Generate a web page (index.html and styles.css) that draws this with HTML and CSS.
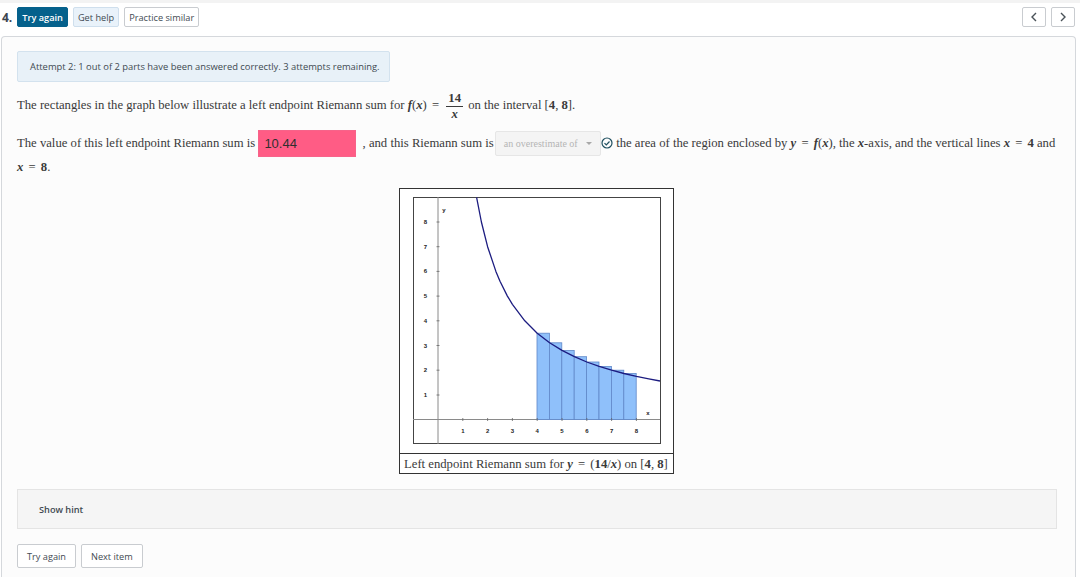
FILE: index.html
```html
<!DOCTYPE html>
<html lang="en">
<head>
    <meta charset="UTF-8">
    <title>Riemann sum question</title>
    <link rel="stylesheet" href="styles.css">
</head>
<body>
    <div class="top-strip"></div>

    <div class="toolbar">
        <strong class="number">4.</strong>
        <button class="btn btn-primary">Try again</button>
        <button class="btn btn-light">Get help</button>
        <button class="btn">Practice similar</button>
        <div class="nav">
            <button class="btn btn-nav">
                <svg width="8" height="10" viewBox="0 0 8 10"><path d="M6 1 2 5l4 4" /></svg>
            </button>
            <button class="btn btn-nav">
                <svg width="8" height="10" viewBox="0 0 8 10"><path d="M2 1l4 4-4 4" /></svg>
            </button>
        </div>
    </div>

    <div class="card">
        <div class="alert">Attempt 2: 1 out of 2 parts have been answered correctly. 3 attempts remaining.</div>

        <p class="line-first">
            The rectangles in the graph below illustrate a left endpoint Riemann sum for
            <span class="m">f</span>(<span class="m">x</span>) <span class="eq">=</span>
            <span class="frac"><span class="frac-top">14</span><span class="frac-bottom m">x</span></span>
            on the interval [<b>4</b>, <b>8</b>].
        </p>

        <p class="line-second">
            The value of this left endpoint Riemann sum is
            <input class="answer" type="text" value="10.44" readonly>
            , and this Riemann sum is
            <span class="select">an overestimate of<span class="select-arrow"></span></span>
            <svg class="check" width="12" height="12" viewBox="0 0 12 12">
                <circle cx="6" cy="6" r="5" />
                <path d="M3.5 6.2 5.3 8l3.2-3.5" />
            </svg>
            the area of the region enclosed by <span class="m">y</span> <span class="eq">=</span> <span class="m">f</span>(<span class="m">x</span>), the <span class="m">x</span>-axis, and the vertical lines <span class="m">x</span> <span class="eq">=</span> <b>4</b> and
            <span class="m">x</span> <span class="eq">=</span> <b>8</b>.
        </p>

        <figure class="graph">
            <svg class="plot" width="248" height="248" viewBox="413 197 248 248">
                <rect class="frame" x="413.5" y="197.5" width="247" height="246" />
                <line class="axis" x1="438" y1="197" x2="438" y2="444" />
                <line class="axis" x1="413" y1="419.5" x2="660" y2="419.5" />

                <g class="bars">
                    <rect x="537" y="333.2" width="12.4" height="86.4" />
                    <rect x="549.4" y="342.8" width="12.4" height="76.8" />
                    <rect x="561.8" y="350.4" width="12.4" height="69.2" />
                    <rect x="574.2" y="356.7" width="12.4" height="62.9" />
                    <rect x="586.6" y="362" width="12.4" height="57.6" />
                    <rect x="599" y="366.4" width="12.4" height="53.2" />
                    <rect x="611.4" y="370.2" width="12.4" height="49.4" />
                    <rect x="623.8" y="373.5" width="12.4" height="46.1" />
                </g>

                <g class="ticks">
                    <path d="M462.8 418v3M487.6 418v3M512.4 418v3M537.2 418v3M562 418v3M586.8 418v3M611.6 418v3M636.4 418v3" />
                    <path d="M436.5 395h3M436.5 370.2h3M436.5 345.5h3M436.5 320.8h3M436.5 296.1h3M436.5 271.4h3M436.5 246.7h3M436.5 222h3" />
                </g>

                <polyline class="curve" points="476.6,197.3 481.4,222 487.6,246.7 495.9,271.4 500,281.3 507.4,296.1 512.4,304.3 524.8,320.8 537.2,333.2 549.6,342.8 562,350.4 574.4,356.7 586.8,362 599.2,366.4 611.6,370.2 624,373.5 636.4,376.4 648.8,378.9 660,381" />

                <g class="labels">
                    <text x="462.8" y="433">1</text>
                    <text x="487.6" y="433">2</text>
                    <text x="512.4" y="433">3</text>
                    <text x="537.2" y="433">4</text>
                    <text x="562" y="433">5</text>
                    <text x="586.8" y="433">6</text>
                    <text x="611.6" y="433">7</text>
                    <text x="636.4" y="433">8</text>
                    <text x="648" y="415">x</text>
                    <text x="425.5" y="397">1</text>
                    <text x="425.5" y="372">2</text>
                    <text x="425.5" y="347.5">3</text>
                    <text x="425.5" y="322.5">4</text>
                    <text x="425.5" y="298">5</text>
                    <text x="425.5" y="273">6</text>
                    <text x="425.5" y="248.5">7</text>
                    <text x="425.5" y="224">8</text>
                    <text x="444" y="212">y</text>
                </g>
            </svg>
            <figcaption>Left endpoint Riemann sum for <span class="m">y</span> <span class="eq">=</span> (<b>14</b>/<span class="m">x</span>) on [<b>4</b>, <b>8</b>]</figcaption>
        </figure>

        <div class="hint">Show hint</div>

        <div class="actions">
            <button class="btn btn-large">Try again</button>
            <button class="btn btn-large">Next item</button>
        </div>
    </div>
</body>
</html>
```

FILE: styles.css
```css
html, body {
    height: 577px;
    overflow: hidden;
}

body {
    margin: 0;
    background: #fff;
    color: #3a3a3a;
    font-family: "Liberation Serif", serif;
    font-size: 12.7px;
}

.top-strip {
    height: 3px;
    background: #f3f3f3;
}

.toolbar {
    display: flex;
    align-items: center;
    gap: 5px;
    padding: 4px 5px 0 2px;
    height: 20px;
}

.number {
    font-family: "Open Sans", sans-serif;
    font-size: 12px;
    color: #3b4550;
}

.btn {
    height: 20px;
    padding: 0 4px;
    background: #fff;
    border: 1px solid #c9ccd0;
    border-radius: 2px;
    color: #3f4a52;
    font-family: "Open Sans", sans-serif;
    font-size: 9.2px;
    white-space: nowrap;
}

.btn-primary {
    background: #05618c;
    border-color: #05618c;
    color: #fff;
    font-weight: 600;
}

.btn-light {
    background: #e9f2fa;
    border-color: #cfdfed;
}

.nav {
    display: flex;
    gap: 5px;
    margin-left: auto;
}

.btn-nav {
    display: flex;
    align-items: center;
    justify-content: center;
    width: 24px;
    padding: 0;
}

.btn-nav path {
    fill: none;
    stroke: #4a5258;
    stroke-width: 1.4;
}

/* bottom edge is cut off by the window, so no bottom border */
.card {
    box-sizing: border-box;
    height: 541px;
    margin: 9px 4px 0 1px;
    padding: 14px 18px 0 15px;
    background: #fcfcfc;
    border: 1px solid #d5d8dc;
    border-bottom: none;
    border-radius: 4px 4px 0 0;
}

.alert {
    box-sizing: border-box;
    width: 373px;
    height: 31px;
    padding: 0 12px;
    background: #e8f1f8;
    border: 1px solid #d3e2ee;
    border-radius: 2px;
    color: #3f4a52;
    font-family: "Open Sans", sans-serif;
    font-size: 9.4px;
    line-height: 29px;
    white-space: nowrap;
}

p {
    margin: 0;
}

.line-first {
    height: 38px;
    margin-top: 4px;
    line-height: 38px;
}

.eq {
    margin: 0 2px;
}

.frac {
    display: inline-flex;
    flex-direction: column;
    align-items: center;
    margin: 0 2px;
    line-height: 15px;
    vertical-align: middle;
}

.frac-top {
    padding: 0 2px;
    border-bottom: 1px solid #3a3a3a;
    font-weight: bold;
}

.line-second {
    margin-top: 6px;
    line-height: 17px;
}

.m {
    font-style: italic;
    font-weight: bold;
}

.answer {
    box-sizing: border-box;
    width: 98px;
    height: 27px;
    margin: 0 3px 2px 0;
    padding: 0 5px;
    background: #ff5c85;
    border: 1px solid #f7638a;
    color: #2f2f2f;
    font-family: "Liberation Sans", sans-serif;
    font-size: 13px;
    vertical-align: middle;
}

.select {
    display: inline-flex;
    align-items: center;
    justify-content: space-between;
    box-sizing: border-box;
    width: 106px;
    height: 25px;
    margin: 0 2px 2px -2px;
    padding: 0 8px;
    background: #f4f4f4;
    border: 1px solid #e6e6e6;
    border-radius: 2px;
    color: #b5b5b5;
    font-size: 10px;
    vertical-align: middle;
}

.select-arrow {
    width: 0;
    height: 0;
    border-left: 3px solid transparent;
    border-right: 3px solid transparent;
    border-top: 3px solid #a8a8a8;
}

.check {
    margin-left: -5px;
    vertical-align: -2px;
    fill: none;
    stroke: #1f4f5f;
    stroke-width: 1.2;
}

.graph {
    box-sizing: border-box;
    width: 275px;
    margin: 12px 0 0 382px;
    padding: 8px 13px 0;
    background: #fff;
    border: 1px solid #333;
}

.plot {
    display: block;
}

.frame {
    fill: #fff;
    stroke: #444;
}

.axis {
    stroke: #8a8a8a;
}

.bars rect {
    fill: #8fc0fa;
    stroke: #5f87c8;
    stroke-width: 0.8;
}

.ticks path {
    stroke: #666;
    stroke-width: 0.8;
}

.curve {
    fill: none;
    stroke: #1c1c80;
    stroke-width: 1.3;
    stroke-linejoin: round;
}

.labels text {
    fill: #222;
    font-family: "Liberation Sans", sans-serif;
    font-size: 6px;
    font-weight: bold;
    text-anchor: middle;
}

figcaption {
    height: 19px;
    margin: 8px -13px 0;
    padding: 0 4px;
    border-top: 1px solid #333;
    line-height: 21px;
    white-space: nowrap;
}

.hint {
    box-sizing: border-box;
    height: 40px;
    margin-top: 15px;
    padding: 0 21px;
    background: #f5f5f5;
    border: 1px solid #e4e4e4;
    color: #3f4a52;
    font-family: "Open Sans", sans-serif;
    font-size: 9.2px;
    font-weight: 600;
    line-height: 39px;
}

.actions {
    display: flex;
    gap: 5px;
    margin-top: 15px;
}

.btn-large {
    height: 24px;
    padding: 0 9px;
}
```
